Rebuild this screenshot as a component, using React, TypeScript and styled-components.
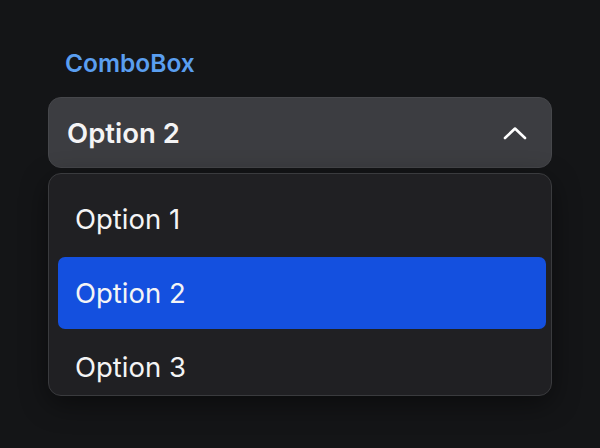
import React from 'react';
import styled, { createGlobalStyle } from 'styled-components';

const GlobalStyle = createGlobalStyle`
  html, body {
    margin: 0;
    padding: 0;
    background: #141517;
  }
  body {
    font-family: Inter, "Noto Sans", sans-serif;
    -webkit-font-smoothing: antialiased;
  }
`;

const Page = styled.div`
  width: 600px;
  height: 448px;
  box-sizing: border-box;
  padding: 50px 48px 0 48px;
  background: #141517;
`;

const Label = styled.div`
  height: 26px;
  line-height: 26px;
  padding-left: 17px;
  margin-bottom: 21px;
  font-size: 24.5px;
  font-weight: 600;
  color: #5a9ef0;
`;

const Trigger = styled.div`
  display: flex;
  align-items: center;
  justify-content: space-between;
  height: 71px;
  box-sizing: border-box;
  padding: 0 24px 0 18px;
  border: 1px solid #46474b;
  border-radius: 13px;
  background: #3c3d41;
  color: #f4f4f5;
  font-size: 27.5px;
  font-weight: 600;
`;

const Chevron = () => (
  <svg width="24" height="14" viewBox="0 0 24 14" fill="none">
    <path d="M2 12 L12 2.5 L22 12" stroke="#ffffff" strokeWidth="2.6" strokeLinecap="round" strokeLinejoin="round" />
  </svg>
);

const List = styled.div`
  display: flex;
  flex-direction: column;
  gap: 2px;
  margin-top: 5px;
  height: 223px;
  box-sizing: border-box;
  padding: 9px 5px 9px 9px;
  overflow: hidden;
  border: 1px solid #3a3b3e;
  border-radius: 13px;
  background: #202023;
  box-shadow: 0 8px 28px rgba(0, 0, 0, 0.45);
`;

const Item = styled.div<{ $active?: boolean }>`
  flex: 0 0 72px;
  display: flex;
  align-items: center;
  padding-left: 17px;
  border-radius: 7px;
  background: ${(p) => (p.$active ? '#1450df' : 'transparent')};
  color: #f4f4f5;
  font-size: 27.5px;
  font-weight: 400;
`;

const options = ['Option 1', 'Option 2', 'Option 3'];

export default function App() {
  const selected = 'Option 2';
  return (
    <>
      <GlobalStyle />
      <Page>
        <Label>ComboBox</Label>
        <Trigger>
          <span>{selected}</span>
          <Chevron />
        </Trigger>
        <List>
          {options.map((o) => (
            <Item key={o} $active={o === selected}>
              {o}
            </Item>
          ))}
        </List>
      </Page>
    </>
  );
}
